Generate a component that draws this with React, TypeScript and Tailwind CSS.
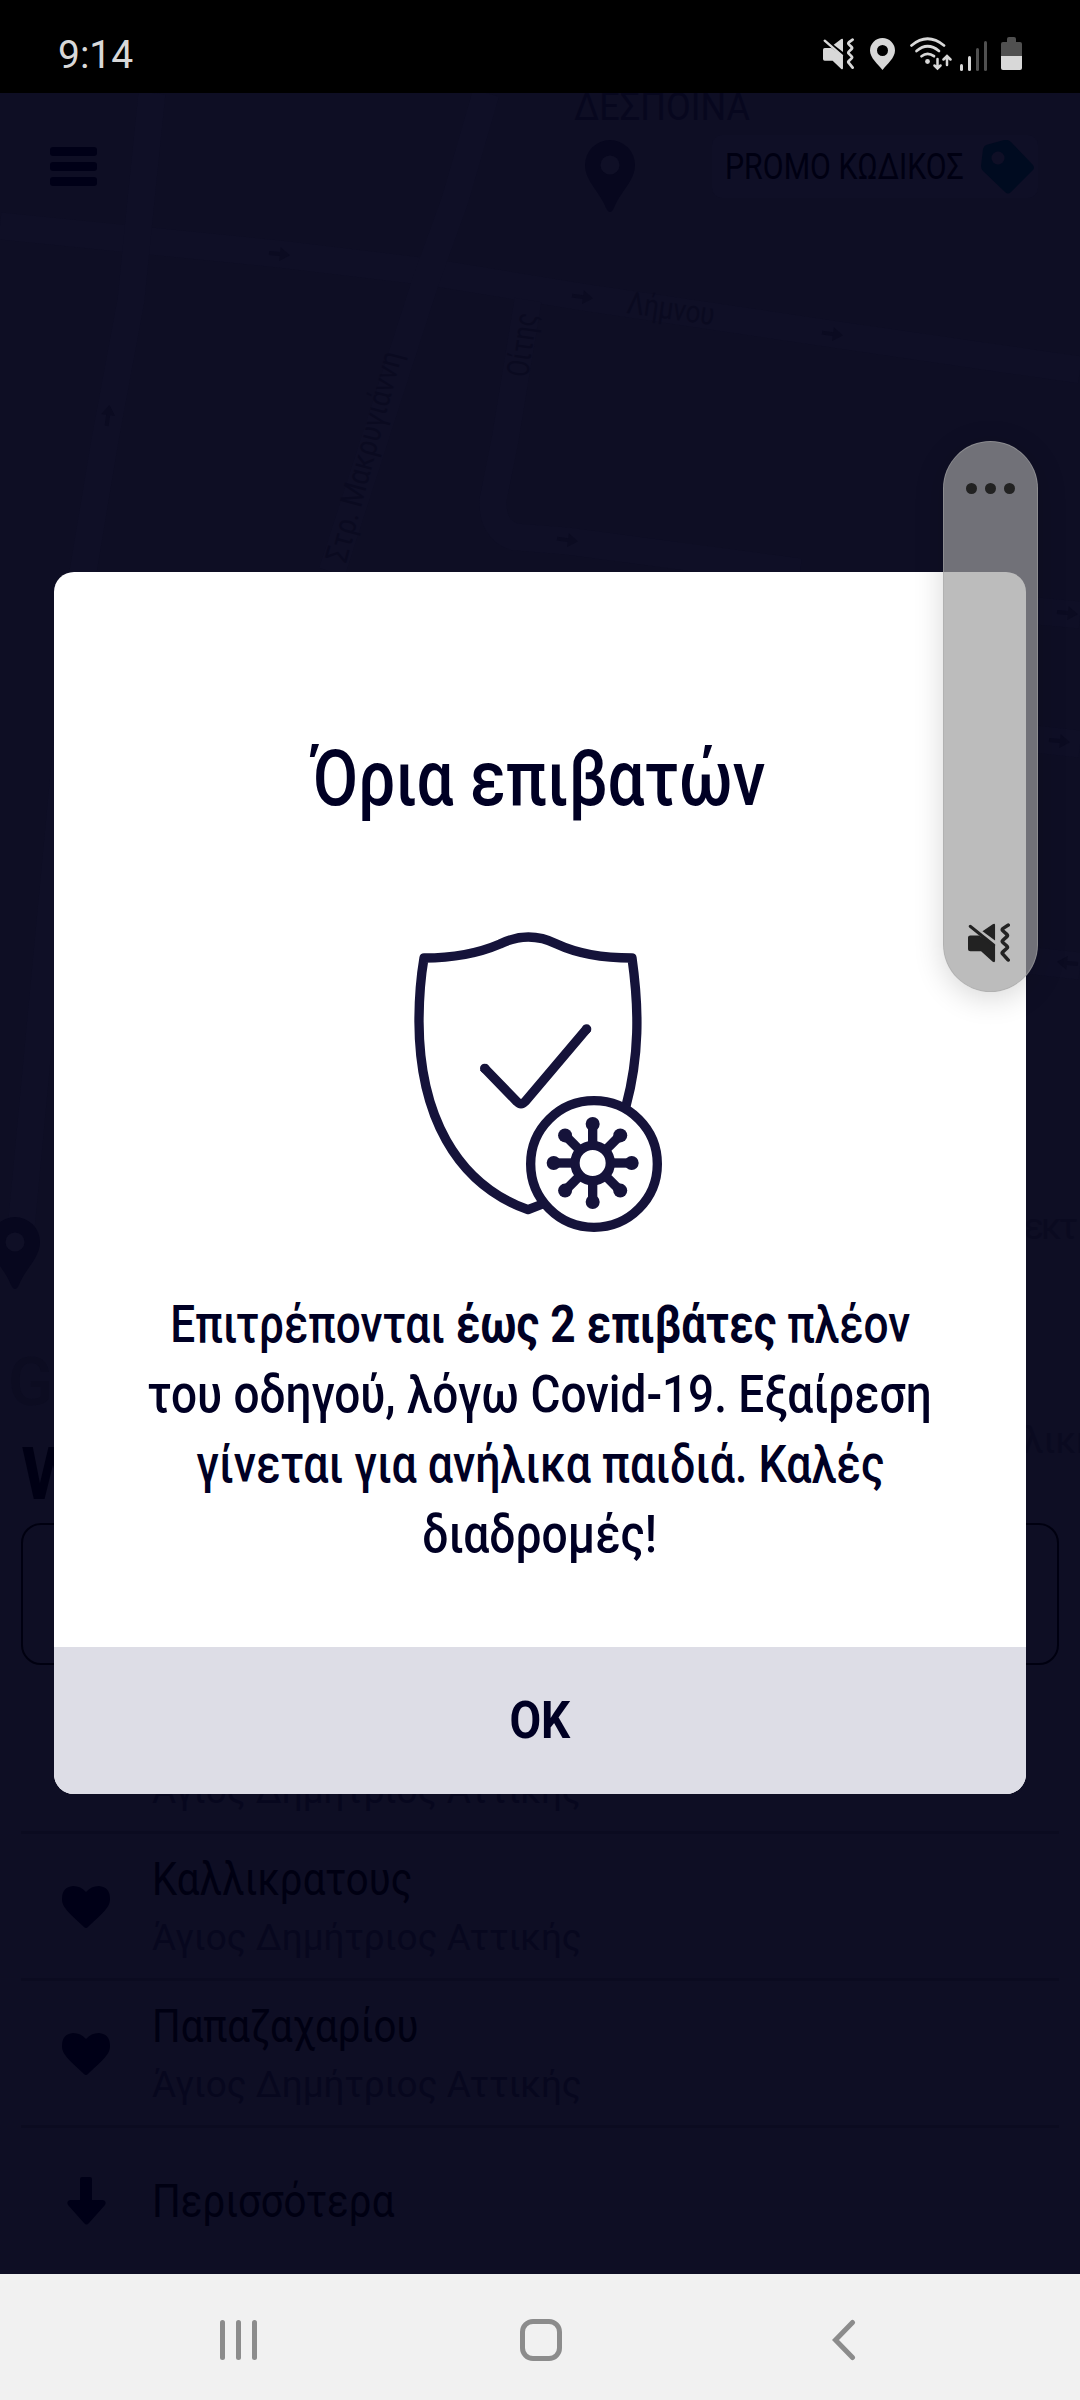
import { ReactNode } from 'react';

type FavouriteProps = { name?: string, address: string }

const roadArrows = [
    { x: 279, y: 254, r: 6 },
    { x: 582, y: 297, r: 8 },
    { x: 832, y: 334, r: 8 },
    { x: 567, y: 540, r: 8 },
    { x: 1067, y: 613, r: 6 },
    { x: 1059, y: 741, r: 6 },
    { x: 1068, y: 963, r: 186 },
    { x: 108, y: 416, r: -82 },
];

function MuteVibrateIcon({ className }: { className: string }) {
    return (
        <svg viewBox="0 0 90 96" preserveAspectRatio="none" className={className} fill="currentColor">
            <path d="M5 30h19l34 24v36q0 6-5 3L28 68H5q-5 0-5-5V35q0-5 5-5z" />
            <path d="M58 5v37L31 20 53 3q5-3 5 2z" />
            <path d="M5 8l50 45" stroke="currentColor" strokeWidth="7" strokeLinecap="round" />
            <path d="M86 5L75 13q-3 3 0 6l8 8q3 3 0 6l-8 8q-3 3 0 6l8 8q3 3 0 6l-8 8q-3 3 0 6l11 14" fill="none" stroke="currentColor" strokeWidth="8" strokeLinecap="round" />
        </svg>
    );
}

function MapPin({ className }: { className: string }) {
    return (
        <svg viewBox="0 0 50 72" className={className}>
            <path d="M25 0a25 25 0 0 1 25 25c0 16-15 27-21 43q-4 8-8 0C15 52 0 41 0 25A25 25 0 0 1 25 0z" fill="#07071e" />
            <circle cx="25" cy="25" r="9.5" fill="#0f0f26" />
        </svg>
    );
}

function StatusBar() {
    return (
        <div className="flex h-[93px] shrink-0 justify-between bg-black pl-[58px] pr-[58px] text-[#d8d8d8]">
            <div className="pt-[32px] text-[39px] leading-[46px]">9:14</div>
            <div className="flex pt-[37px]">
                <MuteVibrateIcon className="mt-px h-[32px] w-[31px]" />
                <svg viewBox="0 0 25 32" className="mt-px ml-[16px] h-[32px] w-[25px]">
                    <path fillRule="evenodd" d="M12.5 0A12.5 12.5 0 0 1 25 12.5C25 20 17 26 12.5 32 8 26 0 20 0 12.5A12.5 12.5 0 0 1 12.5 0zm0 7a5.5 5.5 0 1 0 0 11 5.5 5.5 0 0 0 0-11z" fill="currentColor" />
                </svg>
                <svg viewBox="0 0 42 34" className="ml-[15px] h-[34px] w-[42px]" fill="none" stroke="currentColor" strokeWidth="2.7" strokeLinecap="round">
                    <path d="M1.5 8.5Q17.500-5 34 8.500" />
                    <path d="M6.500 14Q17.500 4.500 29 14" />
                    <path d="M11.500 19.200Q17.500 14.500 24 19.200" />
                    <circle cx="17.500" cy="24.500" r="2.400" fill="currentColor" stroke="none" />
                    <path d="M27.500 22v9M24.500 28.500l3 3 3-3M37 28v-8M33.500 22.500l3.500-3.500 3.500 3.500" strokeWidth="2.500" />
                </svg>
                <div className="mt-[3px] ml-[8px] flex h-[31px] items-end gap-[5px]">
                    <i className="h-[7px] w-[3px] rounded-full bg-[#d8d8d8]" />
                    <i className="h-[15px] w-[3px] rounded-full bg-[#d8d8d8]" />
                    <i className="h-[23px] w-[3px] rounded-full bg-[#505050]" />
                    <i className="h-[30px] w-[3px] rounded-full bg-[#505050]" />
                </div>
                <div className="ml-[14px] flex h-[33px] w-[21px] flex-col items-center">
                    <i className="h-[5px] w-[9px] rounded-t-[2px] bg-[#505050]" />
                    <i className="h-[14px] w-full rounded-t-[2px] bg-[#505050]" />
                    <i className="h-[14px] w-full rounded-b-[2px] bg-[#d8d8d8]" />
                </div>
            </div>
        </div>
    );
}

function StreetMap() {
    return (
        <svg viewBox="0 93 1080 2181" className="absolute inset-0 h-full w-full font-['Roboto']">
            <g fill="none" stroke="#0f0f26" strokeWidth="27">
                <path d="M0 226L279 254L430 272L582 297L832 334L1080 370" />
                <path d="M152 93L141 200L131 300L105 440L83 572L20 1240" />
                <path d="M486 93L455 200L425 283L332 572" />
                <path d="M528 300L505 440L493 500Q492 530 515 537L567 541L800 572" />
                <path d="M1026 610L1080 615M1026 738L1080 744M1026 960L1080 966" />
            </g>
            {roadArrows.map((a, i) => (
                <path key={i} d="M-10-2H1V-7L11 0L1 7V2H-10z" transform={`translate(${a.x} ${a.y}) rotate(${a.r})`} fill="#0b0b21" />
            ))}
            <g fill="#0a0a20" fontSize="31">
                <text transform="translate(626 313) rotate(8)" textLength="88" lengthAdjust="spacingAndGlyphs">Λήμνου</text>
                <text transform="translate(528 378) rotate(-82)" textLength="64" lengthAdjust="spacingAndGlyphs">Οίτης</text>
                <text transform="translate(346 564) rotate(-75)" textLength="217" lengthAdjust="spacingAndGlyphs">Στρ. Μακρυγιάννη</text>
            </g>
            <text x="574" y="120" fontSize="39" fill="#07071e" textLength="176" lengthAdjust="spacingAndGlyphs">ΔΕΣΠΟΙΝΑ</text>
            <g fill="#0a0a20" fontSize="37">
                <text x="1024" y="1239" textLength="54">εκτ</text>
                <text x="1023" y="1453">λική</text>
            </g>
            <text x="8" y="1405" fontSize="66" fill="#0c0c21" className="font-medium">G</text>
        </svg>
    );
}

function TopBar() {
    return (
        <div className="flex justify-between pt-[42px] pl-[50px] pr-[42px]">
            <button className="flex h-[63px] flex-col justify-center gap-[6px]">
                <i className="h-[9px] w-[47px] rounded-[3px] bg-[#000017]" />
                <i className="h-[9px] w-[47px] rounded-[3px] bg-[#000017]" />
                <i className="h-[9px] w-[47px] rounded-[3px] bg-[#000017]" />
            </button>
            <button className="flex h-[63px] w-[326px] items-center rounded-[10px] bg-[#0f0f26] pl-[13px]">
                <span className="w-[256px] origin-left scale-x-[0.842] text-left text-[36px] leading-[42px] whitespace-nowrap text-[#000012]">PROMO ΚΩΔΙΚΟΣ</span>
                <svg viewBox="0 0 53 54" className="h-[54px] w-[53px] shrink-0">
                    <path d="M5 5L23 0Q27-1 30 2L52 25Q54 28 52 30L30 52Q27 55 24 52L2 31Q0 29 0 26L2 9Q3 6 5 5z" fill="#000b20" />
                    <circle cx="17" cy="18" r="6.500" fill="#0f0f26" />
                </svg>
            </button>
        </div>
    );
}

function Row({ icon, children }: { icon: ReactNode, children: ReactNode }) {
    return (
        <div className="flex h-[147px] border-b-[3px] border-[#0b0b20]">
            <div className="w-[131px] shrink-0 pl-[41px]">{icon}</div>
            {children}
        </div>
    );
}

function Favourite({ name, address }: FavouriteProps) {
    return (
        <Row icon={
            <svg viewBox="0 0 48 42" className="mt-[52px] h-[42px] w-[48px]">
                <path d="M24 6Q29 0 37 0q11 1 11 13c0 8-6 13-22 28q-2 2-4 0C6 26 0 21 0 13Q0 1 11 0q8 0 13 6z" fill="#000017" />
            </svg>
        }>
            <div className="whitespace-nowrap">
                <div className="h-[54px] origin-left scale-x-[0.873] pt-[18px] text-[46px] leading-[54px] text-[#000012]">{name}</div>
                <div className="mt-[29px] origin-left scale-x-[1.025] text-[36px] leading-[42px] text-[#07071e]">{address}</div>
            </div>
        </Row>
    );
}

function BottomSheet() {
    return (
        <div className="mt-auto h-[840px] px-[21px]">
            <h2 className="h-[89px] text-[73px] leading-[80px] font-bold text-[#000014]">W</h2>
            <div className="h-[142px] rounded-[20px] border-2 border-[#000010]" />
            <div className="mt-[22px]">
                <Favourite address="Άγιος Δημήτριος Αττικής" />
                <Favourite name="Καλλικρατους" address="Άγιος Δημήτριος Αττικής" />
                <Favourite name="Παπαζαχαρίου" address="Άγιος Δημήτριος Αττικής" />
                <div className="flex h-[147px]">
                    <div className="w-[131px] shrink-0 pt-[49px] pl-[46px]">
                        <svg viewBox="0 0 39 48" className="h-[48px] w-[39px]">
                            <path d="M13 2q0-2 2-2h8q2 0 2 2v21h11q4 1 2 5L22 46q-2.500 3-5 0L1 28q-2-4 2-5h10z" fill="#000017" />
                        </svg>
                    </div>
                    <div className="origin-left scale-x-[0.875] pt-[46px] text-[46px] leading-[54px] whitespace-nowrap text-[#000012]">Περισσότερα</div>
                </div>
            </div>
        </div>
    );
}

function ShieldIcon() {
    return (
        <svg viewBox="0 0 960 1080" className="h-[360px] w-[320px]" fill="none" stroke="#15133a" strokeWidth="28" strokeLinejoin="round">
            <path d="M738 618C778 470 778 330 756 174C660 174 590 160 530 132C475 105 415 105 360 132C295 160 220 174 132 174Q117 262 117 365C118 640 225 850 444 929L488 912" />
            <path d="M310 501L411 605Q423 618 435 605L623 383" />
            {/* rounded tips of the tick */}
            <path d="M315 506l-1-1M619 388l1-1" strokeLinecap="round" />
            <circle cx="642" cy="792" r="190" />
            <circle cx="638" cy="789" r="53" />
            {[0, 45, 90, 135, 180, 225, 270, 315].map((deg) => (
                <g key={deg} transform={`rotate(${deg} 638 789)`}>
                    <path d="M638 735V674" />
                    <circle cx="638" cy="672" r="21" fill="#15133a" stroke="none" />
                </g>
            ))}
        </svg>
    );
}

function PassengerLimitDialog() {
    return (
        <div className="absolute inset-0 flex items-start justify-center pt-[479px]">
            <div className="flex h-[1222px] w-[972px] flex-col overflow-hidden rounded-[20px] bg-white text-[#000024]">
                <div className="flex flex-1 flex-col items-center pt-[162px] text-center whitespace-nowrap">
                    <h1 className="ml-[-3px] scale-x-[0.852] text-[77px] leading-[90px] font-medium">Όρια επιβατών</h1>
                    <div className="mt-[76px] h-[360px]">
                        <ShieldIcon />
                    </div>
                    <div className="mt-[30px] flex flex-col items-center text-[51px] leading-[70px] font-medium">
                        <p className="scale-x-[0.866]">Επιτρέπονται <b>έως 2 επιβάτες</b> πλέον</p>
                        <p className="scale-x-[0.9]">του οδηγού, λόγω Covid-19. Εξαίρεση</p>
                        <p className="scale-x-[0.877]">γίνεται για ανήλικα παιδιά. Καλές</p>
                        <p className="scale-x-[0.905]">διαδρομές!</p>
                    </div>
                </div>
                <button className="h-[147px] bg-[#dddde6] pt-[2px] text-[51px] font-bold">
                    <span className="inline-block scale-x-[0.9]">OK</span>
                </button>
            </div>
        </div>
    );
}

function VolumePanel() {
    return (
        <div className="absolute top-[348px] left-[943px] flex h-[551px] w-[95px] flex-col items-center justify-between rounded-full border border-[#a8a8a8]/50 bg-[#9e9e9e]/69 pt-[41px] pb-[28px] text-[#222222] shadow-[0_6px_30px_rgba(0,0,0,0.16)]">
            <div className="flex gap-[8px]">
                <i className="h-[11px] w-[11px] rounded-full bg-current" />
                <i className="h-[11px] w-[11px] rounded-full bg-current" />
                <i className="h-[11px] w-[11px] rounded-full bg-current" />
            </div>
            <MuteVibrateIcon className="mr-[4px] h-[40px] w-[42px]" />
        </div>
    );
}

function NavBar() {
    return (
        <div className="flex h-[126px] shrink-0 items-center bg-[#f1f1f1] pt-[6px] pl-[220px]">
            <div className="flex gap-[11px]">
                <i className="h-[40px] w-[5px] rounded-full bg-[#8c8c8c]" />
                <i className="h-[40px] w-[5px] rounded-full bg-[#8c8c8c]" />
                <i className="h-[40px] w-[5px] rounded-full bg-[#8c8c8c]" />
            </div>
            <div className="ml-[263px] h-[42px] w-[42px] rounded-[13px] border-[5px] border-[#8c8c8c]" />
            <svg viewBox="0 0 24 42" className="ml-[270px] h-[42px] w-[24px]" fill="none" stroke="#8c8c8c" strokeWidth="5" strokeLinecap="round">
                <path d="M20.500 3.500L3.500 21L20.500 38.500" />
            </svg>
        </div>
    );
}

export default function App() {
    return (
        <div className="flex h-[2400px] w-[1080px] flex-col overflow-hidden bg-[#0e0e24] font-['Roboto',sans-serif]">
            <StatusBar />
            <main className="relative flex-1 overflow-hidden">
                <StreetMap />
                <MapPin className="absolute top-[47px] left-[585px] h-[72px] w-[50px]" />
                <MapPin className="absolute top-[1124px] left-[-10px] h-[72px] w-[50px]" />
                <div className="relative flex h-full flex-col">
                    <TopBar />
                    <BottomSheet />
                </div>
                <PassengerLimitDialog />
                <VolumePanel />
            </main>
            <NavBar />
        </div>
    );
}
